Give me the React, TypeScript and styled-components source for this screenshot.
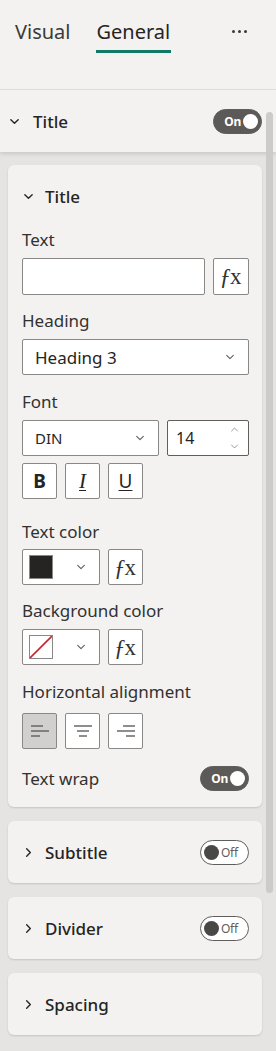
import React from "react";
import styled, { createGlobalStyle } from "styled-components";

const GlobalStyle = createGlobalStyle`
  html, body {
    margin: 0;
    padding: 0;
    background: #f3f2f1;
  }
  body {
    font-family: "Noto Sans", "Open Sans", sans-serif;
    color: #323130;
  }
  * { box-sizing: border-box; }
`;

const Pane = styled.div`
  position: relative;
  width: 276px;
  height: 1051px;
  overflow: hidden;
  background: #e6e4e2;
  display: flex;
  flex-direction: column;
`;

const Header = styled.div`
  height: 90px;
  background: #f3f2f1;
  border-bottom: 1px solid #e1dfdd;
  display: flex;
  align-items: flex-start;
  padding: 17px 0 0 15px;
`;

const Tab = styled.div<{ $active?: boolean }>`
  position: relative;
  font-size: 20px;
  line-height: 30px;
  color: ${(p) => (p.$active ? "#252423" : "#3b3a39")};
  margin-right: 26px;
  padding-bottom: 6px;

  &::after {
    content: "";
    display: ${(p) => (p.$active ? "block" : "none")};
    position: absolute;
    left: 0;
    right: -1px;
    bottom: 0;
    height: 3px;
    background: #117865;
  }
`;

const More = styled.div`
  margin-left: auto;
  margin-right: 29px;
  display: flex;
  gap: 3px;
  padding-top: 13px;

  span {
    width: 3px;
    height: 3px;
    border-radius: 50%;
    background: #3b3a39;
  }
`;

const SectionHeader = styled.div`
  position: relative;
  z-index: 1;
  height: 62px;
  background: #f3f2f1;
  display: flex;
  align-items: center;
  padding: 0 14px 0 9px;
  box-shadow: 0 2px 4px rgba(0, 0, 0, 0.12);
`;

const HeaderTitle = styled.div<{ $gap?: number }>`
  font-size: 17px;
  font-weight: 500;
  color: #252423;
  margin-left: ${(p) => p.$gap ?? 13}px;
  flex: 1;
`;

const Body = styled.div`
  flex: 1;
  display: flex;
  flex-direction: column;
  gap: 14px;
  padding: 13px 14px 0 8px;
`;

const Card = styled.div`
  background: #f3f2f1;
  border-radius: 6px;
  box-shadow: 0 1px 2px rgba(0, 0, 0, 0.14);
  display: flex;
  flex-direction: column;
`;

const CardHeader = styled.div`
  height: 62px;
  display: flex;
  align-items: center;
  padding: 0 13px 0 15px;
`;

const CardContent = styled.div`
  display: flex;
  flex-direction: column;
  padding: 0 13px 16px 14px;
`;

const Label = styled.div<{ $mt: number }>`
  font-size: 17px;
  line-height: 20px;
  color: #323130;
  margin-top: ${(p) => p.$mt}px;
`;

const Row = styled.div<{ $mt: number }>`
  display: flex;
  gap: 8px;
  margin-top: ${(p) => p.$mt}px;
`;

const Field = styled.div<{ $w?: number; $h?: number; $dark?: boolean; $pl?: number }>`
  height: ${(p) => p.$h ?? 36}px;
  ${(p) => (p.$w ? `width: ${p.$w}px;` : "flex: 1;")}
  background: #ffffff;
  border: 1px solid ${(p) => (p.$dark ? "#605e5c" : "#8a8886")};
  border-radius: 2px;
  display: flex;
  align-items: center;
  padding: 0 13px 0 ${(p) => p.$pl ?? 12}px;
  color: #252423;
  position: relative;
`;

const FieldText = styled.span<{ $size?: number }>`
  flex: 1;
  font-size: ${(p) => p.$size ?? 17}px;
`;

const IconButton = styled.div<{ $selected?: boolean; $h?: number; $w?: number }>`
  width: ${(p) => p.$w ?? 35}px;
  height: ${(p) => p.$h ?? 36}px;
  background: ${(p) => (p.$selected ? "#d2d0ce" : "#ffffff")};
  border: 1px solid #8a8886;
  border-radius: 2px;
  display: flex;
  align-items: center;
  justify-content: center;
  color: #252423;
`;

const Fx = styled.span`
  font-family: "Liberation Serif", "DejaVu Serif", serif;
  font-size: 23px;
  line-height: 1;
  color: #323130;
  padding-right: 1px;

  i {
    font-style: italic;
    margin-right: -1px;
  }
`;

const StyleGlyph = styled.span<{ $kind: "b" | "i" | "u" }>`
  font-size: ${(p) => (p.$kind === "i" ? 21 : 19)}px;
  line-height: 1;
  font-weight: ${(p) => (p.$kind === "b" ? 700 : 400)};
  font-style: ${(p) => (p.$kind === "i" ? "italic" : "normal")};
  font-family: ${(p) =>
    p.$kind === "i" ? '"Liberation Serif", serif' : '"Noto Sans", sans-serif'};
  text-decoration: ${(p) => (p.$kind === "u" || p.$kind === "i" ? "underline" : "none")};
  text-decoration-thickness: 1px;
  text-underline-offset: 2px;
  color: #252423;
`;

const Swatch = styled.div<{ $none?: boolean }>`
  width: 24px;
  height: 24px;
  border: 1px solid #8a8886;
  background: ${(p) => (p.$none ? "#ffffff" : "#252423")};
  margin-right: auto;
  overflow: hidden;
`;

const Toggle = styled.div<{ $on: boolean }>`
  width: 49px;
  height: 25px;
  border-radius: 13px;
  background: ${(p) => (p.$on ? "#5c5a58" : "#ffffff")};
  border: 1px solid #605e5c;
  display: flex;
  align-items: center;
  flex-direction: ${(p) => (p.$on ? "row" : "row-reverse")};
  justify-content: flex-end;
  padding: 0 3px;
  gap: 2px;
  flex-shrink: 0;
`;

const ToggleText = styled.span<{ $on: boolean }>`
  font-size: 12px;
  font-weight: ${(p) => (p.$on ? 700 : 400)};
  color: ${(p) => (p.$on ? "#ffffff" : "#605e5c")};
  letter-spacing: -0.3px;
`;

const Knob = styled.span<{ $on: boolean }>`
  width: 15px;
  height: 15px;
  border-radius: 50%;
  background: ${(p) => (p.$on ? "#ffffff" : "#4a4846")};
`;

const WrapRow = styled.div`
  display: flex;
  align-items: center;
  justify-content: space-between;
  margin-top: 17px;
  height: 25px;
`;

const Spinner = styled.div`
  display: flex;
  flex-direction: column;
  gap: 8px;
  margin-right: -4px;
`;

const ScrollThumb = styled.div`
  position: absolute;
  left: 266px;
  top: 112px;
  width: 7px;
  height: 781px;
  border-radius: 4px;
  background: #cdcbc9;
  z-index: 2;
`;

const Chevron = ({ dir, size = 10, color = "#605e5c", w = 1.3 }: { dir: "down" | "right" | "up"; size?: number; color?: string; w?: number }) => {
  const d =
    dir === "down" ? "M2 4 L6 8 L10 4" : dir === "up" ? "M2 8 L6 4 L10 8" : "M4 2 L8 6 L4 10";
  return (
    <svg width={size} height={size} viewBox="0 0 12 12" fill="none">
      <path d={d} stroke={color} strokeWidth={w} strokeLinecap="round" strokeLinejoin="round" />
    </svg>
  );
};

const AlignIcon = ({ align }: { align: "left" | "center" | "right" }) => {
  const lines =
    align === "left"
      ? [[1, 13], [1, 19], [1, 10]]
      : align === "center"
      ? [[1, 19], [4, 16], [6, 14]]
      : [[7, 19], [1, 19], [10, 19]];
  return (
    <svg width="20" height="14" viewBox="0 0 20 14" fill="none">
      {lines.map(([a, b], i) => (
        <line key={i} x1={a} x2={b} y1={2 + i * 5} y2={2 + i * 5} stroke="#605e5c" strokeWidth="1.4" />
      ))}
    </svg>
  );
};

const FxIcon = () => (
  <Fx>
    <i>ƒ</i>x
  </Fx>
);

const SwitchToggle = ({ on }: { on: boolean }) => (
  <Toggle $on={on}>
    <ToggleText $on={on}>{on ? "On" : "Off"}</ToggleText>
    <Knob $on={on} />
  </Toggle>
);

const CollapsedCard = ({ title, toggle }: { title: string; toggle?: boolean }) => (
  <Card>
    <CardHeader>
      <Chevron dir="right" size={11} color="#252423" w={1.5} />
      <HeaderTitle $gap={11}>{title}</HeaderTitle>
      {toggle && <SwitchToggle on={false} />}
    </CardHeader>
  </Card>
);

export default function App() {
  return (
    <>
      <GlobalStyle />
      <Pane>
        <Header>
          <Tab>Visual</Tab>
          <Tab $active>General</Tab>
          <More>
            <span />
            <span />
            <span />
          </More>
        </Header>
        <SectionHeader>
          <Chevron dir="down" size={11} color="#252423" w={1.5} />
          <HeaderTitle>Title</HeaderTitle>
          <SwitchToggle on />
        </SectionHeader>
        <Body>
          <Card>
            <CardHeader>
              <Chevron dir="down" size={11} color="#252423" w={1.5} />
              <HeaderTitle $gap={11}>Title</HeaderTitle>
            </CardHeader>
            <CardContent>
              <Label $mt={3}>Text</Label>
              <Row $mt={8}>
                <Field $h={37} />
                <IconButton $h={37} $w={36}>
                  <FxIcon />
                </IconButton>
              </Row>

              <Label $mt={16}>Heading</Label>
              <Row $mt={8}>
                <Field $h={36}>
                  <FieldText>Heading 3</FieldText>
                  <Chevron dir="down" />
                </Field>
              </Row>

              <Label $mt={17}>Font</Label>
              <Row $mt={8}>
                <Field $w={137}>
                  <FieldText $size={15}>DIN</FieldText>
                  <Chevron dir="down" />
                </Field>
                <Field $dark $pl={8}>
                  <FieldText $size={16}>14</FieldText>
                  <Spinner>
                    <Chevron dir="up" size={9} color="#8a8886" w={1.1} />
                    <Chevron dir="down" size={9} color="#8a8886" w={1.1} />
                  </Spinner>
                </Field>
              </Row>
              <Row $mt={7}>
                <IconButton>
                  <StyleGlyph $kind="b">B</StyleGlyph>
                </IconButton>
                <IconButton>
                  <StyleGlyph $kind="i">I</StyleGlyph>
                </IconButton>
                <IconButton>
                  <StyleGlyph $kind="u">U</StyleGlyph>
                </IconButton>
              </Row>

              <Label $mt={23}>Text color</Label>
              <Row $mt={7}>
                <Field $w={78} $pl={6}>
                  <Swatch />
                  <Chevron dir="down" />
                </Field>
                <IconButton>
                  <FxIcon />
                </IconButton>
              </Row>

              <Label $mt={16}>Background color</Label>
              <Row $mt={8}>
                <Field $w={78} $pl={6}>
                  <Swatch $none>
                    <svg width="22" height="22" viewBox="0 0 22 22">
                      <line x1="0" y1="22" x2="22" y2="0" stroke="#c4262e" strokeWidth="1.6" />
                    </svg>
                  </Swatch>
                  <Chevron dir="down" />
                </Field>
                <IconButton>
                  <FxIcon />
                </IconButton>
              </Row>

              <Label $mt={17}>Horizontal alignment</Label>
              <Row $mt={11}>
                <IconButton $selected>
                  <AlignIcon align="left" />
                </IconButton>
                <IconButton>
                  <AlignIcon align="center" />
                </IconButton>
                <IconButton>
                  <AlignIcon align="right" />
                </IconButton>
              </Row>

              <WrapRow>
                <Label $mt={0}>Text wrap</Label>
                <SwitchToggle on />
              </WrapRow>
            </CardContent>
          </Card>
          <CollapsedCard title="Subtitle" toggle />
          <CollapsedCard title="Divider" toggle />
          <CollapsedCard title="Spacing" />
        </Body>
        <ScrollThumb />
      </Pane>
    </>
  );
}
